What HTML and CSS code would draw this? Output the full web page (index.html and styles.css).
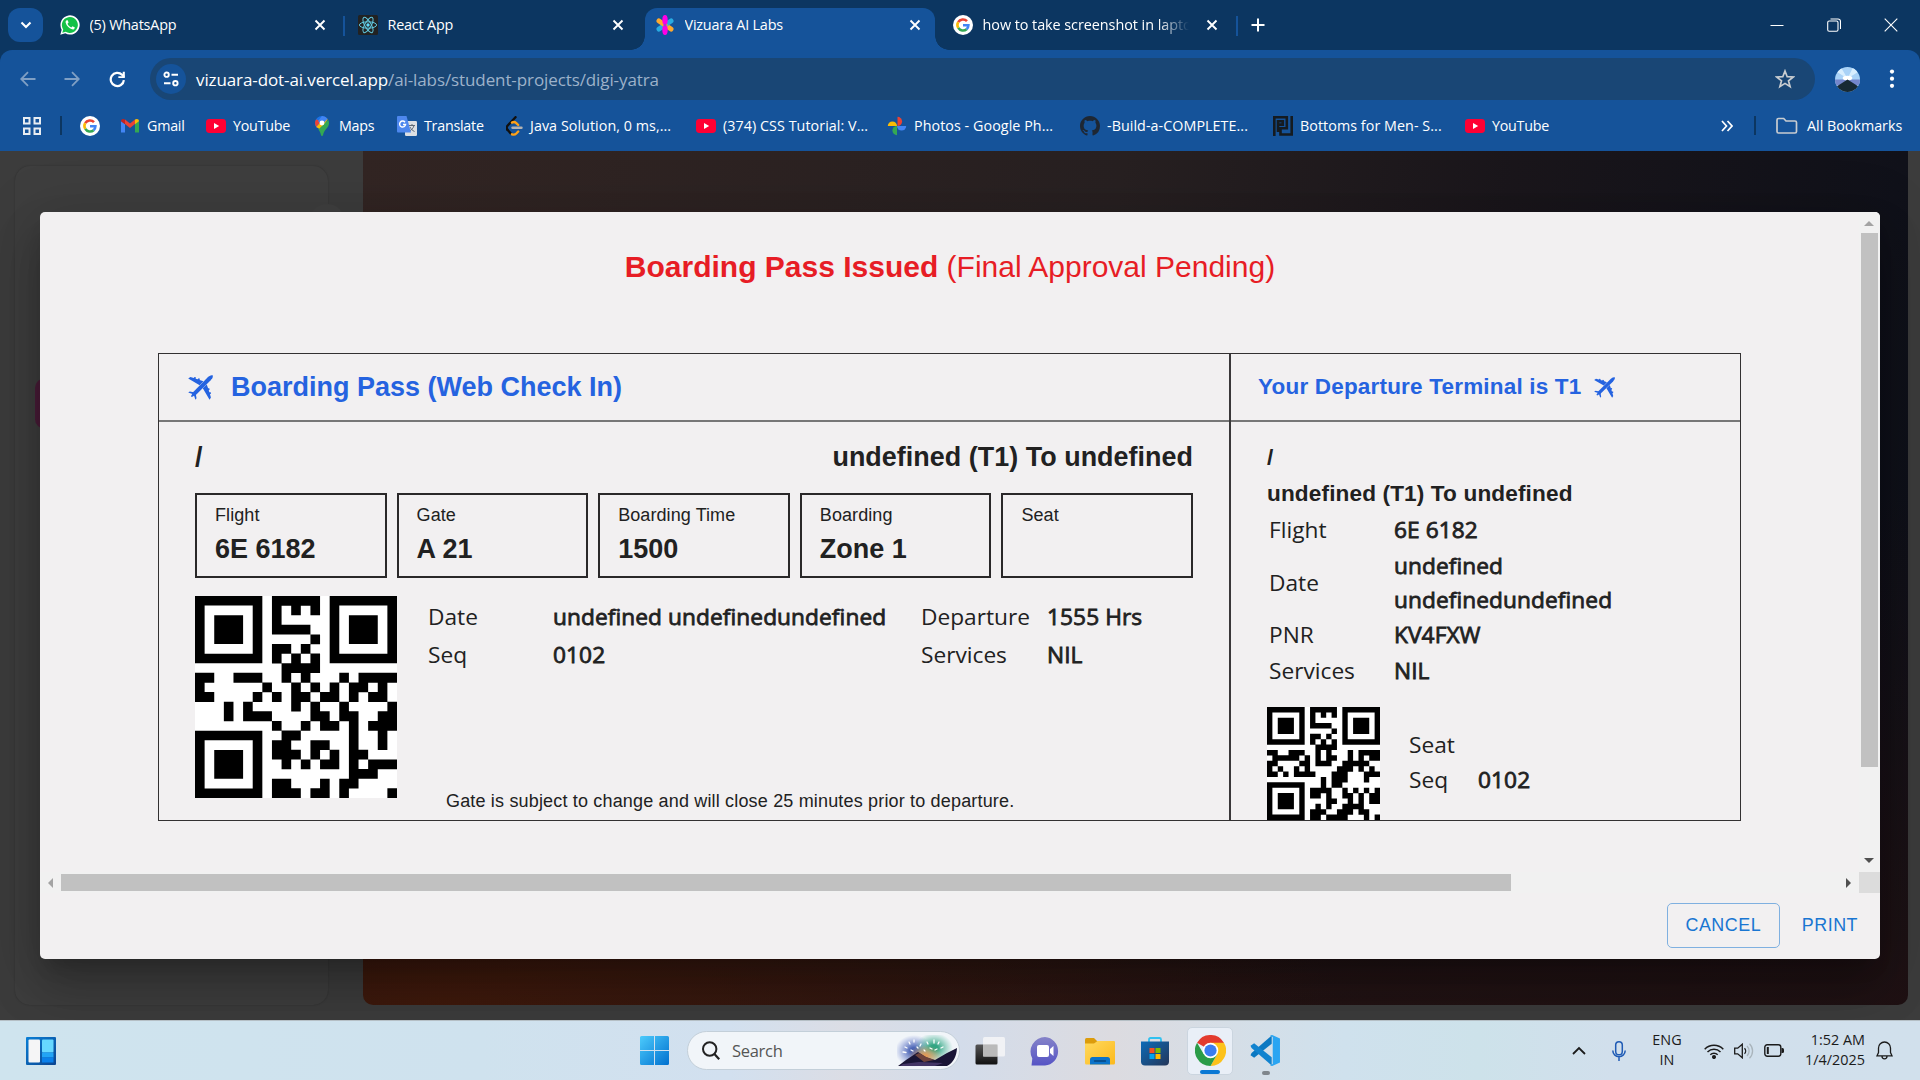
FILE: index.html
```html
<!DOCTYPE html>
<html lang="en">
<head>
<meta charset="utf-8">
<title>Vizuara AI Labs</title>
<link rel="stylesheet" href="styles.css">
</head>
<body>
<svg class="defs" width="0" height="0">
  <defs>
    <symbol id="x" viewBox="0 0 12 12"><path d="M1.5 1.5l9 9M10.5 1.5l-9 9" stroke="#fff" stroke-width="1.9" fill="none"/></symbol>
    <symbol id="google" viewBox="0 0 20 20"><circle cx="10" cy="10" r="10" fill="#fff"/><g fill="none" stroke-width="2.6"><path d="M5.2 7.2A5.5 5.5 0 0 1 14 6.2" stroke="#ea4335"/><path d="M5.3 12.9a5.5 5.5 0 0 1-.1-5.7" stroke="#fbbc05"/><path d="M13.6 14.2a5.5 5.5 0 0 1-8.3-1.3" stroke="#34a853"/><path d="M10 10.2h5.4a5.6 5.6 0 0 1-1.8 4" stroke="#4285f4"/></g></symbol>
    <symbol id="youtube" viewBox="0 0 20 14"><rect width="20" height="14" rx="3.4" fill="#ff0033"/><path d="M8 4l5.2 3L8 10z" fill="#fff"/></symbol>
    <symbol id="plane" viewBox="0 0 24 24"><g fill="#2563e0"><path d="M23.700.3c.6 1.700-.7 3.500-1.900 4.700L8 18.700l-4.300 2.500-.9-.9L5.300 16 19 2.200C20.200 1 22-.3 23.700.3z"/><path d="M.2 3.300L2.300 2l3.200.9.800-1 1.200.3-.1 1.300 1.900.6.900-.9 1.200.4-.2 1.100 3.600 1.300-3.600 3.800z"/><path d="M20.700 23.800l1.300-2.100-.9-3.200 1-.8-.3-1.200-1.300.1-.6-1.900.9-.9-.4-1.200-1.100.2-1.300-3.600-3.800 3.600z"/><path d="M.2 16.900l1.500-1.100 5 .9-1 2zM7.100 23.800l1.100-1.500-.9-5-2 1z"/></g></symbol>
    <symbol id="finders" viewBox="0 0 21 21"><path d="M0 0h7v7H0zM1 1v5h5V1zM14 0h7v7h-7zM15 1v5h5V1zM0 14h7v7H0zM1 15v5h5v-5z" fill-rule="evenodd"/><path d="M2 2h3v3H2zM16 2h3v3h-3zM2 16h3v3H2z"/></symbol>
  </defs>
</svg>

<header class="browser">
  <div class="tabstrip">
    <button class="tab-search"><svg width="14" height="14" viewBox="0 0 14 14"><path d="M2.500 4.500L7 9l4.500-4.500" fill="none" stroke="#fff" stroke-width="2.100"/></svg></button>
    <div class="tab">
      <svg class="fav" viewBox="0 0 20 20"><path d="M.3 19.700l1.400-5A9.600 9.600 0 1 1 5.300 18.300z" fill="#fff"/><path d="M2.300 17.700l.9-3.300a8 8 0 1 1 2.500 2.400z" fill="#14c147"/><path d="M6.700 5.200c-.9.500-1.300 1.500-1 2.600.8 3 3.300 5.600 6.300 6.500 1.300.4 2.600-.3 2.900-1.900l-2.400-1.200-1.200 1.300c-1.800-.7-3.100-2-3.800-3.700l1.100-1.200-.9-2.400z" fill="#fff"/></svg>
      <span class="tab-title">(5) WhatsApp</span><svg class="close"><use href="#x"/></svg>
    </div>
    <div class="tab divided">
      <svg class="fav" viewBox="0 0 20 20"><rect width="20" height="20" rx="1.500" fill="#222"/><g fill="none" stroke="#61c9e0" stroke-width="1"><ellipse cx="10" cy="10" rx="8.600" ry="3.200"/><ellipse cx="10" cy="10" rx="8.600" ry="3.200" transform="rotate(60 10 10)"/><ellipse cx="10" cy="10" rx="8.600" ry="3.200" transform="rotate(120 10 10)"/></g><circle cx="10" cy="10" r="1.700" fill="#61dafb"/></svg>
      <span class="tab-title">React App</span><svg class="close"><use href="#x"/></svg>
    </div>
    <div class="tab active">
      <svg class="fav" viewBox="0 0 20 20"><g stroke-linecap="round" stroke-width="5"><path d="M16 14L10 10" stroke="#ffa92e"/><path d="M16 6L4 14" stroke="#29abe2"/><path d="M4 6l6 4" stroke="#ffa92e"/></g><ellipse cx="10" cy="5" rx="2.700" ry="5" fill="#ff00e6"/><ellipse cx="10" cy="15" rx="2.700" ry="5" fill="#ff00e6"/><circle cx="10" cy="10" r="1.500" fill="#a33bd0"/></svg>
      <span class="tab-title">Vizuara AI Labs</span><svg class="close"><use href="#x"/></svg>
    </div>
    <div class="tab last">
      <svg class="fav"><use href="#google"/></svg>
      <span class="tab-title fade">how to take screenshot in laptop</span><svg class="close"><use href="#x"/></svg>
    </div>
    <div class="new-tab"><svg width="14" height="14" viewBox="0 0 14 14"><path d="M7 .5v13M.5 7h13" stroke="#fff" stroke-width="2"/></svg></div>
    <div class="window-controls">
      <svg width="14" height="14" viewBox="0 0 14 14"><path d="M.5 7.500h13" stroke="#fff"/></svg>
      <svg width="14" height="14" viewBox="0 0 14 14"><rect x=".7" y="3" width="10.300" height="10.300" rx="1.500" fill="none" stroke="#fff" stroke-width="1.100"/><path d="M3.500 1h7.500a2.500 2.500 0 0 1 2.500 2.500V11" fill="none" stroke="#fff" stroke-width="1.100"/></svg>
      <svg width="14" height="14" viewBox="0 0 14 14"><path d="M.7.7l12.600 12.600M13.300.7L.7 13.300" stroke="#fff" stroke-width="1.100"/></svg>
    </div>
  </div>

  <div class="toolbar">
    <svg class="nav dim" viewBox="0 0 16 16"><path d="M15.500 8H1.500M8 1.200L1.200 8 8 14.800" fill="none" stroke="currentColor" stroke-width="1.800"/></svg>
    <svg class="nav dim" viewBox="0 0 16 16"><path d="M.5 8h14M8 1.200L14.800 8 8 14.800" fill="none" stroke="currentColor" stroke-width="1.800"/></svg>
    <svg class="nav" viewBox="0 0 16 16"><path d="M14 8.500A6.200 6.200 0 1 1 12.300 3.600L14.300 5.600" fill="none" stroke="#fff" stroke-width="2.100"/><path d="M14.900.6v6.100H8.800V5h3.900L13 .6z" fill="#fff"/></svg>
    <div class="omnibox">
      <span class="site-info"><svg width="16" height="16" viewBox="0 0 16 16" fill="none" stroke="#fff" stroke-width="1.900"><circle cx="3.600" cy="3.700" r="2.200"/><path d="M8.500 3.700h6.500M1 12.200h6.500"/><circle cx="12.400" cy="12.200" r="2.200"/></svg></span>
      <span class="url">vizuara-dot-ai.vercel.app<span class="path">/ai-labs/student-projects/digi-yatra</span></span>
      <svg class="star" viewBox="0 0 20 20"><path d="M10 2l2.200 5.700 6 .3-4.700 3.800 1.600 5.900L10 14.400l-5.100 3.300 1.600-5.900L1.800 8l6-.3z" fill="none" stroke="#c9cdd1" stroke-width="1.700"/></svg>
    </div>
    <svg class="avatar" viewBox="0 0 26 26"><defs><clipPath id="av"><circle cx="13" cy="13" r="13"/></clipPath></defs><g clip-path="url(#av)"><rect width="26" height="26" fill="#a9d2f7"/><path d="M0 4l13 8L6 0zM26 4l-13 8L19 0z" fill="#d8eefe"/><path d="M0 13h26v6H0z" fill="#7486cb"/><ellipse cx="13" cy="11.500" rx="5" ry="2.500" fill="#fff"/><path d="M13 13L27 22v5H-1v-5z" fill="#172933"/></g></svg>
    <svg class="menu" viewBox="0 0 6 20"><circle cx="3" cy="2.600" r="2.100"/><circle cx="3" cy="9.700" r="2.100"/><circle cx="3" cy="16.800" r="2.100"/></svg>
  </div>

  <nav class="bookmarks">
    <svg class="apps" viewBox="0 0 18 18"><path d="M1 1h5.500v5.500H1zM11.500 1H17v5.500h-5.500zM1 11.500h5.500V17H1zM11.500 11.500H17V17h-5.500z" fill="none" stroke="#e8edf2" stroke-width="2"/></svg>
    <i class="bar"></i>
    <svg class="bm"><use href="#google"/></svg>
    <a><svg class="bm" viewBox="0 0 20 20"><path d="M1 16.500V5l4 3v8.500z" fill="#4285f4"/><path d="M19 16.500V5l-4 3v8.500z" fill="#34a853"/><path d="M5 8v-4.400l5 3.800 5-3.800V8l-5 3.900z" fill="#ea4335"/><path d="M1 5.200C1 3 3.300 2.300 5 3.600V8.200L1 5.200z" fill="#c5221f"/><path d="M19 5.200C19 3 16.700 2.300 15 3.600V8.200l4-3z" fill="#fbbc04"/></svg>Gmail</a>
    <a><svg class="bm yt"><use href="#youtube"/></svg>YouTube</a>
    <a><svg class="bm" viewBox="0 0 20 20"><path d="M10 0a7 7 0 0 0-7 7c0 2 .8 3.400 2 5l9.500-10.300A7 7 0 0 0 10 0z" fill="#1a73e8"/><path d="M4 3.500A7 7 0 0 0 3 7c0 1.500.5 2.800 1.200 4L9 5z" fill="#ea4335"/><path d="M4.200 11l8-8.800 3.500.800-6 11.500-3-2z" fill="#fbbc04"/><path d="M16.200 3.700A7 7 0 0 1 17 7c0 5-5 6-6 12.300-.2.900-1.800.9-2 0-.4-2.500-1.400-4.300-2.600-5.800z" fill="#34a853"/><path d="M10 0a7 7 0 0 1 5.600 2.800L10 9 6 5l4-5z" fill="#4285f4"/><circle cx="10" cy="7" r="2.400" fill="#fff"/></svg>Maps</a>
    <a><svg class="bm" viewBox="0 0 20 20"><rect x="8" y="5" width="12" height="15" rx="1.200" fill="#dcdfe3"/><path d="M12 9.500h6M15 8v1.500M17 9.500c-.5 2.500-2.500 4.500-4.500 5.500M13 11c1 2 2.500 3.500 4.500 4.500" stroke="#5f6a75" fill="none"/><path d="M1 0h8.500l4.500 16.500H1a1 1 0 0 1-1-1V1a1 1 0 0 1 1-1z" fill="#4d87ee"/><path d="M8 6.200A3 3 0 1 0 8.600 8.500H6" fill="none" stroke="#fff" stroke-width="1.400"/></svg>Translate</a>
    <a class="long"><svg class="bm narrow" viewBox="2 0 17 20" fill="none" stroke-linecap="round" stroke-width="2.400"><path d="M11.500 1.200L3.500 9.800c-1 1.200-1 2.800 0 4" stroke="#101010"/><path d="M3.500 13.800l3.300 3.700" stroke="#101010"/><path d="M8 18.300c1.500.6 3.200.3 4.300-.8l1.900-2M8 6.600c1.500-.900 3-.600 4.300.5l1.900 1.900" stroke="#ffa116"/><path d="M8.500 11.700H17.500" stroke="#b3b3b3"/></svg>Java Solution, 0 ms,...</a>
    <a class="long"><svg class="bm yt red"><use href="#youtube"/></svg>(374) CSS Tutorial: V...</a>
    <a class="long"><svg class="bm" viewBox="0 0 20 20"><path d="M10.500.8a4.600 4.600 0 0 1 0 9.200z" fill="#ea4335"/><path d="M19.200 10a4.600 4.600 0 0 1-9.200 0z" fill="#4285f4"/><path d="M10 19.200A4.600 4.600 0 0 1 10 10z" fill="#34a853"/><path d="M.8 10a4.600 4.600 0 0 1 9.200 0z" fill="#fbbc04"/></svg>Photos - Google Ph...</a>
    <a class="long"><svg class="bm" viewBox="0 0 16 16"><path fill="#1e2733" d="M8 0C3.580 0 0 3.580 0 8c0 3.540 2.290 6.530 5.470 7.590.4.070.55-.17.55-.38 0-.19-.01-.82-.01-1.490-2.010.37-2.530-.49-2.690-.94-.09-.23-.48-.94-.82-1.130-.28-.15-.68-.52-.01-.53.63-.01 1.080.58 1.230.82.72 1.210 1.870.87 2.330.66.07-.52.28-.87.51-1.070-1.780-.2-3.640-.89-3.640-3.950 0-.87.31-1.590.82-2.150-.08-.2-.36-1.020.08-2.120 0 0 .67-.21 2.200.82.64-.18 1.320-.27 2-.27s1.360.09 2 .27c1.530-1.040 2.200-.82 2.200-.82.44 1.100.16 1.920.08 2.120.51.56.82 1.270.82 2.150 0 3.070-1.870 3.750-3.650 3.950.29.25.54.73.54 1.480 0 1.070-.01 1.930-.01 2.200 0 .21.15.46.55.38A8.010 8.010 0 0 0 16 8c0-4.420-3.580-8-8-8z"/></svg>-Build-a-COMPLETE...</a>
    <a class="long"><svg class="bm" viewBox="0 0 20 20" fill="none" stroke="#151b20" stroke-width="2.600"><path d="M1.300 20V1.300h12.500v11H7.500v6.200h11.200V0M5 16V5.300h4.800v3.300H5"/></svg>Bottoms for Men- S...</a>
    <a><svg class="bm yt"><use href="#youtube"/></svg>YouTube</a>
    <svg class="more" viewBox="0 0 12 12"><path d="M1 1l4.500 5L1 11M6.500 1L11 6l-4.500 5" fill="none" stroke="#fff" stroke-width="1.700"/></svg>
    <i class="bar"></i>
    <a class="all"><svg width="22" height="18" viewBox="0 0 22 18"><path d="M1 3a1.500 1.500 0 0 1 1.500-1.500h5.200L10 4h9a1.500 1.500 0 0 1 1.500 1.500v9A1.500 1.500 0 0 1 19 16H2.500A1.500 1.500 0 0 1 1 14.500z" fill="none" stroke="#c9cdd1" stroke-width="1.700"/></svg>All Bookmarks</a>
  </nav>
</header>

<main class="page">
  <aside class="side-card"></aside>
  <section class="hero"></section>
  <span class="side-toggle"></span>
  <span class="side-mark"></span>

  <div class="dialog" role="dialog">
    <div class="scroll-area">
      <div class="content">
        <h1><b>Boarding Pass Issued</b> (Final Approval Pending)</h1>
        <div class="ticket">
          <div class="main-part">
            <div class="ticket-head"><svg class="plane"><use href="#plane"/></svg><h2>Boarding Pass (Web Check In)</h2></div>
            <div class="ticket-body">
              <div class="route"><span>/</span><span>undefined (T1) To undefined</span></div>
              <div class="boxes">
                <div><small>Flight</small><b>6E 6182</b></div>
                <div><small>Gate</small><b>A 21</b></div>
                <div><small>Boarding Time</small><b>1500</b></div>
                <div><small>Boarding</small><b>Zone 1</b></div>
                <div><small>Seat</small></div>
              </div>
              <div class="lower">
                <svg class="qr" viewBox="0 0 21 21"><rect width="21" height="21" fill="#fff"/><use href="#finders"/><path stroke="#000" stroke-width="1.020" d="M8 .5h5M8 1.500h1m1 0h1m1 0h1M8 2.500h1M8 3.500h4M12 4.500h1M8 5.500h2m1 0h1M8 6.500h1m1 0h1m1 0h1M9 7.500h4M0 8.500h2m2 0h3m2 0h1m1 0h1m3 0h1m1 0h4M0 9.500h1m6 0h1m2 0h1m1 0h1m1 0h1m1 0h2m1 0h1M0 10.500h2m4 0h1m1 0h1m1 0h2m1 0h2m1 0h1m1 0h2M3 11.500h1m1 0h1m4 0h1m1 0h1m2 0h1m4 0h1M3 12.500h1m1 0h3m4 0h2m1 0h2m2 0h2M8 13.500h1m2 0h1m1 0h2m1 0h1m1 0h3M9 14.500h2m5 0h1m2 0h1M8 15.500h2m2 0h2m2 0h1m2 0h1M8 16.500h3m1 0h1m1 0h1m1 0h2M9 17.500h1m1 0h1m1 0h2m1 0h1m1 0h3M16 18.500h3M8 19.500h2m3 0h1m1 0h2M8 20.500h3m1 0h2m1 0h1m4 0h1"/></svg>
                <div class="lower-text">
                  <dl class="info">
                    <dt>Date</dt><dd>undefined undefinedundefined</dd><dt>Departure</dt><dd>1555 Hrs</dd>
                    <dt>Seq</dt><dd>0102</dd><dt>Services</dt><dd>NIL</dd>
                  </dl>
                  <p class="note">Gate is subject to change and will close 25 minutes prior to departure.</p>
                </div>
              </div>
            </div>
          </div>
          <div class="stub">
            <div class="ticket-head"><h3>Your Departure Terminal is T1</h3><svg class="plane small"><use href="#plane"/></svg></div>
            <div class="ticket-body">
              <div class="stub-route">/<br>undefined (T1) To undefined</div>
              <dl class="info stub-info">
                <dt>Flight</dt><dd>6E 6182</dd>
                <dt>Date</dt><dd>undefined<br>undefinedundefined</dd>
                <dt>PNR</dt><dd>KV4FXW</dd>
                <dt>Services</dt><dd>NIL</dd>
              </dl>
              <div class="stub-lower">
                <svg class="qr small" viewBox="0 0 21 21"><rect width="21" height="21" fill="#fff"/><use href="#finders"/><path stroke="#000" stroke-width="1.020" d="M8 .5h5M8 1.500h1m1 0h1m1 0h1M8 2.500h1M8 3.500h4M12 4.500h1M8 5.500h2m1 0h1M8 6.500h1m1 0h1m1 0h1M9 7.500h4M0 8.500h2m2 0h3m2 0h1m1 0h1m3 0h1m1 0h4M1 9.500h5m1 0h1m1 0h1m1 0h2m2 0h1m1 0h1m1 0h2M0 10.500h2m4 0h2m1 0h3m2 0h5M0 11.500h1m1 0h1m2 0h1m1 0h1m5 0h3m1 0h1m1 0h1M0 12.500h2m1 0h1m1 0h4m3 0h3m3 0h3M10 13.500h1m1 0h3m3 0h1M10 14.500h1m1 0h2M8 15.500h4m2 0h1m1 0h1m1 0h1m1 0h1M8 16.500h2m1 0h1m2 0h2m1 0h1m1 0h2M11 17.500h2m2 0h1m1 0h1m1 0h2M9 18.500h1m1 0h1m2 0h4M8 19.500h3m2 0h3m1 0h2M8 20.500h2m1 0h4m3 0h1m1 0h1"/></svg>
                <dl class="info seat-info"><dt>Seat</dt><dd></dd><dt>Seq</dt><dd>0102</dd></dl>
              </div>
            </div>
          </div>
        </div>
      </div>
      <div class="vbar"><svg viewBox="0 0 10 5"><path d="M5 0l5 5H0z" fill="#a3a3a3"/></svg><i></i><svg class="end" viewBox="0 0 10 5"><path d="M0 0h10L5 5z" fill="#505050"/></svg></div>
      <div class="hbar"><svg viewBox="0 0 5 10"><path d="M5 0v10L0 5z" fill="#a3a3a3"/></svg><i></i><svg class="end" viewBox="0 0 5 10"><path d="M0 0v10l5-5z" fill="#505050"/></svg></div>
      <div class="corner"></div>
    </div>
    <div class="actions"><button class="outlined">CANCEL</button><button>PRINT</button></div>
  </div>
</main>

<footer class="taskbar">
  <svg class="widgets" viewBox="0 0 30 28"><defs><linearGradient id="wg" x2="1" y2="1"><stop stop-color="#0a7fd6"/><stop offset="1" stop-color="#0c4590"/></linearGradient></defs><rect width="30" height="28" rx="1" fill="url(#wg)"/><rect x="2.500" y="2.500" width="11.500" height="23" rx="1" fill="#f5f5f6"/><rect x="16" y="2.500" width="11.500" height="13" rx="1" fill="#66d8ff"/><rect x="16" y="15.500" width="11.500" height="5" fill="#22a4f5"/><rect x="16" y="20.500" width="11.500" height="5" fill="#0a80ea"/></svg>
  <div class="pins">
    <svg class="start" viewBox="0 0 29 29"><defs><linearGradient id="win" x2="1" y2="1"><stop stop-color="#4ccbfc"/><stop offset="1" stop-color="#0070cf"/></linearGradient></defs><path fill="url(#win)" d="M0 1.500Q0 0 1.500 0H14v14H0zM15 0h12.500Q29 0 29 1.500V14H15zM0 15h14v14H1.500Q0 29 0 27.500zM15 15h14v12.500Q29 29 27.500 29H15z"/></svg>
    <div class="search">
      <svg width="19" height="20" viewBox="0 0 19 20"><circle cx="8.700" cy="8" r="6.700" fill="none" stroke="#222" stroke-width="2"/><path d="M13.200 12.800l5 5.500" stroke="#222" stroke-width="2.200"/></svg>
      <span>Search</span>
      <svg class="art" viewBox="0 0 60 32"><defs><radialGradient id="g1"><stop offset=".2" stop-color="#4963b5"/><stop offset="1" stop-color="#6e82d2" stop-opacity="0"/></radialGradient><radialGradient id="g2"><stop offset=".2" stop-color="#32a583"/><stop offset="1" stop-color="#58bda0" stop-opacity="0"/></radialGradient><radialGradient id="g3"><stop offset=".1" stop-color="#e39a55"/><stop offset="1" stop-color="#d7a064" stop-opacity="0"/></radialGradient></defs><ellipse cx="17" cy="16" rx="19" ry="16" fill="url(#g1)"/><ellipse cx="37" cy="13" rx="19" ry="15" fill="url(#g2)"/><ellipse cx="28" cy="21" rx="17" ry="11" fill="url(#g3)"/><path d="M8 12l2 1M12 7l1 2M17 5v2M6 17l3 .500M20 12l1 1M30 7l1 2M37 5v3M42 7l-1 2M46 12l-2 1M33 13l2 1M40 14l-2 1M24 9l-1 2M27 15l1 1M14 15l2 1" stroke="#fff" stroke-width="1.300" stroke-linecap="round"/><path d="M1 31l8-6 12-8 8 5 9 3 12-7 10-5c-.5 9-4 15-10 18z" fill="#191535"/><path d="M18 20l4-2 7 4 8 3-10 2z" fill="#a8623f" opacity=".6"/><path d="M6 29l16-2 24 1-8 3H3z" fill="#5f4b86" opacity=".6"/></svg>
    </div>
    <svg class="app" viewBox="0 0 30 30"><defs><linearGradient id="tv" x2="0" y2="1"><stop stop-color="#555"/><stop offset="1" stop-color="#111"/></linearGradient></defs><rect x=".5" y="8.500" width="22" height="20" rx="1.500" fill="url(#tv)"/><rect x="8" y="1" width="22" height="19.500" rx="1.500" fill="#f7f7f8" opacity=".82"/><path d="M8 8.500h14.500v12H8z" fill="#bababa"/></svg>
    <svg class="app" viewBox="0 0 30 30"><defs><linearGradient id="ch" x2="0" y2="1"><stop stop-color="#8583c8"/><stop offset="1" stop-color="#5654c5"/></linearGradient></defs><path d="M15 1a14.300 14.300 0 0 1 0 28.500H1.500l.8-7A14.500 14.500 0 0 1 15 1z" fill="url(#ch)"/><rect x="7" y="9" width="12" height="12" rx="2" fill="#fff"/><path d="M20 13l3.500-3v10L20 17z" fill="#fff"/></svg>
    <svg class="app" viewBox="0 0 30 30"><defs><linearGradient id="fo" x2="1" y2="1"><stop stop-color="#ffd95e"/><stop offset="1" stop-color="#fcb91c"/></linearGradient></defs><path d="M0 3.500Q0 2 1.500 2H9l3.500 3.500V10H0z" fill="#dc9c0c"/><path d="M0 7.500h9l3.500-2.500H29q1 0 1 1v21q0 1.500-1.500 1.500h-27Q0 28.500 0 27z" fill="url(#fo)"/><path d="M5 28.500v-5Q5 21 7.500 21h15q2.500 0 2.500 2.500v5z" fill="#0b73c9"/><path d="M9.500 25h11" stroke="#06467f" stroke-width="1.300" stroke-linecap="round"/></svg>
    <svg class="app" viewBox="0 0 30 30"><defs><linearGradient id="st" x2="1" y2="1"><stop stop-color="#0b6bb8"/><stop offset="1" stop-color="#243659"/></linearGradient></defs><path d="M9 6V3.500Q9 2 10.500 2h9Q21 2 21 3.500V6" fill="none" stroke="#30c1f0" stroke-width="1.800"/><path d="M1 5.500h28v20q0 4-4 4H5q-4 0-4-4z" fill="url(#st)"/><path d="M9.500 12h5v5h-5z" fill="#f25022"/><path d="M15.500 12h5v5h-5z" fill="#7fba00"/><path d="M9.500 18h5v5h-5z" fill="#00a4ef"/><path d="M15.500 18h5v5h-5z" fill="#ffb900"/></svg>
    <div class="running"><svg viewBox="0 0 30 30"><path d="M15 15L2 7.500A15 15 0 0 1 28 7.500z" fill="#e33b2e"/><path d="M15 7.500h13A15 15 0 0 1 15 30l6.500-11.300z" fill="#fcc21b"/><path d="M8.500 18.700L2 7.500A15 15 0 0 0 15 30l6.500-11.300z" fill="#2a9c48"/><circle cx="15" cy="15" r="7.500" fill="#fff"/><circle cx="15" cy="15" r="5.900" fill="#3a7df0"/></svg></div>
    <div class="vscode"><svg viewBox="0 0 30 30"><path d="M21 8.500L4 22l-3.500-2.500 1-2L21 .5z" fill="#0a78c2"/><path d="M21 21.500L4 8 .5 10.500l1 2L21 29.500z" fill="#1183cf"/><path d="M21.500 0L29 3.400V26.600L21.500 30q-1.500 0-2-1l2.500-1V2L19.500 1q.5-1 2-1z" fill="#2aa5f2"/></svg></div>
  </div>
  <div class="tray">
    <svg width="14" height="9" viewBox="0 0 14 9"><path d="M1 8l6-6 6 6" fill="none" stroke="#1b1b1b" stroke-width="1.800"/></svg>
    <svg width="14" height="20" viewBox="0 0 14 20" fill="none" stroke="#1f5bb5" stroke-width="1.500"><rect x="3.700" y=".8" width="6.600" height="13" rx="3.300"/><path d="M.8 9.500a6.200 6.200 0 0 0 12.400 0M7 15.800V20"/></svg>
    <span class="lang">ENG<br>IN</span>
    <svg width="20" height="16" viewBox="0 0 20 16" fill="none" stroke="#1b1b1b" stroke-width="1.500"><path d="M.7 6.200a13.200 13.200 0 0 1 18.600 0M3.500 9a9.300 9.300 0 0 1 13 0M6.300 11.800a5.300 5.300 0 0 1 7.400 0"/><circle cx="10" cy="14" r="1.300" fill="#1b1b1b"/></svg>
    <svg width="20" height="16" viewBox="0 0 20 16" fill="none" stroke="#1b1b1b" stroke-width="1.300"><path d="M.7 5.200v5.600h3l4.600 4V1.200l-4.600 4z"/><path d="M10.500 5.200a4 4 0 0 1 0 5.600"/><path d="M13 3a7 7 0 0 1 0 10M15.500.8a10 10 0 0 1 0 14.400" stroke="#a9b4bb"/></svg>
    <svg width="20" height="13" viewBox="0 0 20 13"><rect x=".8" y=".8" width="16" height="11.400" rx="2.400" fill="none" stroke="#1b1b1b" stroke-width="1.400"/><rect x="2.800" y="3" width="2" height="7" fill="#1b1b1b"/><path d="M17.500 4h1a1.500 1.500 0 0 1 1.500 1.500v2A1.500 1.500 0 0 1 18.500 9h-1z" fill="#1b1b1b"/></svg>
    <span class="clock">1:52 AM<br>1/4/2025</span>
    <svg width="17" height="19" viewBox="0 0 17 19"><path d="M8.500 1a6 6 0 0 1 6 6v4.500l1.500 3.300H1l1.500-3.300V7a6 6 0 0 1 6-6zM6 15.300a2.500 2.500 0 0 0 5 0" fill="none" stroke="#1b1b1b" stroke-width="1.300"/></svg>
  </div>
</footer>
</body>
</html>
```
FILE: styles.css
```css
* { box-sizing: border-box; margin: 0; padding: 0; }

body {
  width: 1920px;
  height: 1080px;
  overflow: hidden;
  display: flex;
  flex-direction: column;
  font-family: "Open Sans", "Noto Sans", sans-serif;
}

svg { display: block; flex: none; }
button { font: inherit; border: 0; background: none; }
.defs { position: absolute; }

/* browser */
.browser { flex: none; height: 151px; background: #0c3661; color: #fff; }

.tabstrip {
  height: 50px;
  display: grid;
  grid-template-columns: 35px 302px 300px 290px 303px 36px 1fr;
  padding-left: 8px;
  align-items: center;
  font-size: 14.4px;
  letter-spacing: -0.2px;
}
.tab-search {
  width: 35px; height: 34px;
  border-radius: 12px;
  background: #15539a;
  display: grid;
  place-items: center;
}
.tab { display: flex; align-items: center; height: 42px; margin-top: 8px; padding: 0 19px 9px 17px; position: relative; }
.tab.divided { padding: 0 21px 9px 13px; }
.tab.divided::before, .tab.last::after {
  content: ""; width: 2px; height: 20px; background: #15539a;
  position: absolute; left: -2px; top: 8px;
}
.tab.last::after { left: auto; right: 0; }
.tab.active { background: #15539a; border-radius: 12px 12px 0 0; padding: 0 14px 9px 10px; }
.tab.active::before, .tab.active::after {
  content: ""; position: absolute; bottom: 0; width: 14px; height: 14px;
}
.tab.active::before { left: -14px; background: radial-gradient(circle at 0 0, transparent 13.5px, #15539a 14px); }
.tab.active::after { right: -14px; background: radial-gradient(circle at 100% 0, transparent 13.5px, #15539a 14px); }
.tab.last { padding: 0 20px 9px 18px; }
.fav { width: 20px; height: 20px; margin-right: 9.5px; }
.tab-title { flex: 1; white-space: nowrap; overflow: hidden; }
.fade { margin-right: 17px; letter-spacing: -0.05px; -webkit-mask-image: linear-gradient(90deg, #000 85%, transparent); mask-image: linear-gradient(90deg, #000 85%, transparent); }
.close { width: 12px; height: 12px; }
.new-tab { display: flex; justify-content: center; padding-left: 3px; }
.window-controls { justify-self: end; display: flex; gap: 43px; padding-right: 22px; }

.toolbar {
  height: 58px;
  background: #15539a;
  border-radius: 12px 12px 0 0;
  display: flex;
  align-items: center;
  padding-left: 20px;
}
.nav { width: 16px; height: 16px; margin-right: 28px; }
.nav:nth-child(3) { width: 17px; height: 17px; margin: 0 24px 0 1px; }
.dim { color: #7f9fc4; }
.omnibox {
  width: 1665px; height: 42px;
  border-radius: 21px;
  background: #194675;
  display: flex;
  align-items: center;
  padding: 0 20px 0 6px;
}
.site-info { width: 30px; height: 30px; border-radius: 50%; background: #15539a; display: grid; place-items: center; }
.url { flex: 1; margin-left: 10px; font-size: 17px; letter-spacing: -0.1px; }
.path { color: #9db2ca; }
.star { width: 20px; height: 20px; }
.avatar { width: 25px; height: 25px; margin-left: 20px; }
.menu { width: 6px; height: 20px; margin-left: 29px; fill: #fff; }

.bookmarks {
  height: 43px;
  background: #15539a;
  display: grid;
  grid-template-columns: 37px 20px 40px 86px 106px 85px 109px 190px 191px 193px 193px 192px 256px 33px 22px 1fr;
  align-items: center;
  padding: 0 0 8px 23px;
  font-size: 14.3px;
  letter-spacing: -0.25px;
}
.bookmarks a { display: flex; align-items: center; gap: 7px; white-space: nowrap; }
.bookmarks a.long { letter-spacing: 0.06px; }
.bm { width: 20px; height: 20px; }
.bm.narrow { width: 17px; }
.yt { height: 14px; }
.apps { width: 18px; height: 18px; }
.bar { width: 2px; height: 19px; background: #0c3661; }
.more { width: 12px; height: 12px; }
.bookmarks a.all { gap: 9px; letter-spacing: 0; }

/* page behind the dialog */
.page { flex: none; height: 869px; position: relative; background: #3c3c3c; display: flex; padding: 0 12px 15px 15px; overflow: hidden; }
.side-card { width: 313px; margin: 15px 35px 0 0; border-radius: 15px; background: #3e3e3e; box-shadow: 0 0 2px rgba(0,0,0,.25); }
.hero {
  flex: 1;
  border-radius: 0 0 10px 10px;
  background:
    radial-gradient(ellipse 900px 300px at 5% 100%, rgba(68,26,10,.85), transparent),
    linear-gradient(180deg, transparent 40%, rgba(36,18,18,.8) 100%),
    linear-gradient(100deg, #322523 0%, #272021 45%, #1a161b 68%, #0c0f19 100%);
}
.side-toggle { position: absolute; left: 309px; top: 53px; width: 36px; height: 36px; border-radius: 50%; background: #404040; }
.side-mark { position: absolute; left: 35px; top: 227px; width: 30px; height: 51px; border-radius: 10px; background: #4a1c38; }

.dialog {
  position: absolute;
  left: 40px; top: 61px;
  width: 1840px; height: 747px;
  border-radius: 5px;
  background: #f2f0f1;
  box-shadow: 0 14px 19px -9px rgba(0,0,0,.2), 0 30px 48px 4px rgba(0,0,0,.16), 0 11px 58px 10px rgba(0,0,0,.14);
  overflow: hidden;
  display: flex;
  flex-direction: column;
  color: #212121;
}
.scroll-area { display: grid; grid-template-columns: 1819px 21px; grid-template-rows: 660px 21px; }
.content { padding: 37px 0 0 118px; font-family: "Liberation Sans", Arial, sans-serif; }
.content h1 { width: 1584px; text-align: center; font-size: 30px; line-height: 36px; font-weight: 400; color: #e71d25; }

.vbar, .hbar { display: flex; align-items: center; background: #f1f1f1; }
.vbar { flex-direction: column; padding: 9px 1px 9px 0; }
.vbar svg { width: 10px; height: 5px; }
.vbar i { width: 17px; height: 534px; margin-top: 7px; background: #c1c1c1; }
.hbar { padding: 0 8px; }
.hbar svg { width: 5px; height: 10px; }
.hbar i { height: 17px; width: 1450px; margin-left: 8px; background: #c1c1c1; }
.vbar .end { margin-top: auto; }
.hbar .end { margin-left: auto; }
.corner { background: #dcdcdc; }

.ticket {
  width: 1583px; height: 468px;
  margin-top: 68px;
  border: 1px solid #333132;
  display: grid;
  grid-template-columns: 1070px 1fr;
  overflow: hidden;
}
.ticket-head { height: 68px; border-bottom: 2px solid #777; display: flex; align-items: center; color: #2563e0; }
.plane { width: 25px; height: 25px; }
.plane.small { width: 21px; height: 21px; margin-left: 12px; }
.main-part .ticket-head { padding-left: 28.5px; gap: 18.5px; }
.ticket-head h2 { font-size: 27px; line-height: 30px; }
.ticket-head h3 { font-size: 22.5px; line-height: 30px; letter-spacing: 0.19px; }
.main-part .ticket-body { padding: 20px 36px 0 36px; }
.route { display: flex; justify-content: space-between; font-size: 26.9px; font-weight: 700; line-height: 30px; letter-spacing: 0.04px; }
.boxes { margin-top: 21px; display: grid; grid-template-columns: repeat(5, 1fr); gap: 10px; }
.boxes div { height: 85px; border: 2px solid #2a2829; padding: 10px 18px; }
.boxes small { display: block; font-size: 18px; line-height: 20px; letter-spacing: 0.08px; }
.boxes b { display: block; margin-top: 9px; font-size: 27px; line-height: 30px; }
.lower { margin-top: 18px; display: flex; gap: 31px; height: 215px; }
.qr { width: 202px; height: 202px; }
.lower-text { flex: 1; display: flex; flex-direction: column; justify-content: space-between; padding-top: 2px; }
.info { display: grid; grid-template-columns: 125px 368px 126px auto; font-family: "Open Sans", sans-serif; font-size: 22.7px; line-height: 38px; white-space: nowrap; }
.info dt { font-weight: 400; }
.info dd { font-weight: 400; letter-spacing: 0.08px; -webkit-text-stroke: 0.8px; }
.note { margin-left: 18px; font-size: 18px; line-height: 20px; letter-spacing: 0.17px; white-space: nowrap; }

.stub { border-left: 2px solid #3a3839; }
.stub .ticket-head { padding-left: 27px; }
.stub .ticket-body { padding: 17.5px 0 0 36px; }
.stub-route { font-size: 22.6px; font-weight: 700; line-height: 36px; letter-spacing: 0.13px; }
.stub-info { grid-template-columns: 125px auto; padding: 1.5px 0 0 2px; line-height: 34px; row-gap: 1.5px; }
.stub-info dt { align-self: center; }
.stub-lower { margin-top: 19.5px; display: flex; }
.qr.small { width: 113px; height: 113px; }
.seat-info { grid-template-columns: 69px auto; grid-auto-rows: 35px; line-height: 35px; padding: 20px 0 0 29px; }

.actions { flex: 1; display: flex; align-items: center; justify-content: flex-end; padding: 0 22px 1px 0; gap: 22px; font-family: "Liberation Sans", Arial, sans-serif; font-size: 17.9px; }
.actions button { color: #1976d2; height: 45px; letter-spacing: 0.5px; }
.outlined { width: 113px; border: 1px solid #7fb0e0; border-radius: 5px; }

/* taskbar */
.taskbar {
  flex: 1;
  border-top: 1px solid #b5bfc5;
  background: linear-gradient(90deg, #cfe4ee 0%, #cfe2ee 25%, #d2e0ef 38%, #dbdde5 44%, #d3dcea 50%, #dcdbe0 58%, #cfe1ed 70%, #cde2ea 77%, #d1dfec 84%, #d1e0ec 100%);
  display: flex;
  align-items: center;
  color: #1b1b1b;
}
.widgets { width: 30px; height: 28px; margin-left: 26px; }
.pins { display: flex; align-items: center; margin-left: 584px; }
.start { width: 29px; height: 29px; margin-right: 18px; }
.search { width: 273px; height: 39px; border-radius: 20px; background: #f1f5f9; border: 1px solid #c3cfd9; display: flex; align-items: center; padding: 0 2px 0 13px; font-size: 16.5px; color: #555; }
.search span { margin-left: 12px; flex: 1; letter-spacing: -0.3px; padding-bottom: 1px; }
.art { width: 60px; height: 32px; }
.search + .app { margin-left: 15px; }
.app { width: 30px; height: 30px; margin-right: 25px; }
.running { width: 46px; height: 48px; margin-left: -8px; border-radius: 5px; background: #e9eff7; border: 1px solid #cbd5df; display: flex; justify-content: center; align-items: center; position: relative; }
.running svg, .vscode svg { width: 31px; height: 31px; }
.running::after { content: ""; position: absolute; bottom: 0; width: 20px; height: 4px; border-radius: 2px; background: #0a78d4; }
.vscode { margin-left: 17px; height: 48px; display: flex; justify-content: center; align-items: center; position: relative; }
.vscode::after { content: ""; position: absolute; bottom: 0; width: 8px; height: 4px; border-radius: 2px; background: #7f868c; }
.tray { margin-left: auto; display: flex; align-items: center; font-size: 14.4px; line-height: 20px; padding-right: 27px; }
.tray svg:first-child { margin-right: 26px; }
.lang { width: 54px; text-align: center; margin: 0 10px 0 14px; }
.lang, .clock { padding-bottom: 1px; }
.lang + svg, .lang + svg + svg { margin-right: 10px; }
.clock { width: 81px; text-align: right; margin-right: 11px; }
```
